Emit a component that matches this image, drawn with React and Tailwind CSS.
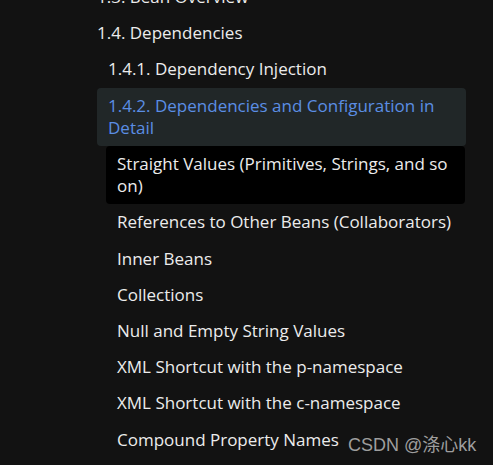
const items = [
  "Straight Values (Primitives, Strings, and so on)",
  "References to Other Beans (Collaborators)",
  "Inner Beans",
  "Collections",
  "Null and Empty String Values",
  "XML Shortcut with the p-namespace",
  "XML Shortcut with the c-namespace",
  "Compound Property Names",
];

function Item({ children, className = "" }) {
  return (
    <div className={"rounded-[4px] py-[7px] pl-[11px] pr-[8px] leading-[22.2px] " + className}>
      {children}
    </div>
  );
}

export default function App() {
  return (
    <div
      className="relative w-[493px] h-[465px] overflow-hidden bg-[#121212] text-[17px] text-[#ececec]"
      style={{ fontFamily: '"Open Sans", "Noto Sans", sans-serif' }}
    >
      <div className="-mt-[21px] pl-[86px] pr-[27px]">
        <Item>1.3. Bean Overview</Item>
        <Item>1.4. Dependencies</Item>
        <div className="pl-[11px]">
          <Item>1.4.1. Dependency Injection</Item>
          <Item className="bg-[#212728] text-[#5b8ee4]">
            1.4.2. Dependencies and Configuration in Detail
          </Item>
          <div className="pl-[9px] pr-[1px]">
            {items.map((t, i) => (
              <Item key={t} className={i === 0 ? "bg-black" : ""}>
                {t}
              </Item>
            ))}
          </div>
        </div>
      </div>
      <div
        className="absolute left-[348px] top-[433px] text-[18px] leading-[24px] text-[#9e9e9e]"
        style={{ fontFamily: '"Liberation Sans", "Noto Sans CJK SC", sans-serif' }}
      >
        CSDN @涤心kk
      </div>
    </div>
  );
}
